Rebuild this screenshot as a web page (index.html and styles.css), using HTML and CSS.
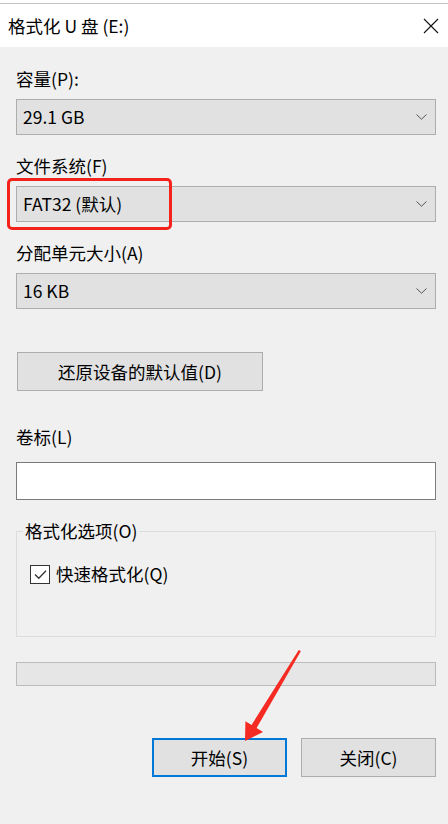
FILE: index.html
```html
<!DOCTYPE html>
<html lang="zh-CN">
<head>
<meta charset="utf-8">
<title>格式化 U 盘 (E:)</title>
<link rel="stylesheet" href="styles.css">
</head>
<body>
<div class="window">
  <div class="topedge"></div>
  <header class="titlebar">
    <span class="title">格式化 U 盘 (E:)</span>
    <svg class="close" width="16" height="16" viewBox="0 0 16 16"><path d="M1 1L15 15M15 1L1 15" stroke="#111" stroke-width="1.1" fill="none"/></svg>
  </header>
  <main class="content">
    <div class="label first">容量(P):</div>
    <div class="select">
      <span>29.1 GB</span>
      <svg class="chev" width="11" height="6" viewBox="0 0 11 6"><path d="M0.5 0.5L5.5 5.2L10.5 0.5" stroke="#555" stroke-width="1" fill="none"/></svg>
    </div>

    <div class="label">文件系统(F)</div>
    <div class="select highlighted">
      <span>FAT32 (默认)</span>
      <svg class="chev" width="11" height="6" viewBox="0 0 11 6"><path d="M0.5 0.5L5.5 5.2L10.5 0.5" stroke="#555" stroke-width="1" fill="none"/></svg>
      <div class="redbox"></div>
    </div>

    <div class="label">分配单元大小(A)</div>
    <div class="select">
      <span>16 KB</span>
      <svg class="chev" width="11" height="6" viewBox="0 0 11 6"><path d="M0.5 0.5L5.5 5.2L10.5 0.5" stroke="#555" stroke-width="1" fill="none"/></svg>
    </div>

    <button class="btn reset">还原设备的默认值(D)</button>

    <div class="label vol">卷标(L)</div>
    <div class="textbox"></div>

    <fieldset class="group">
      <legend>格式化选项(O)</legend>
      <div class="check-row">
        <span class="checkbox"><svg width="17" height="17" viewBox="0 0 17 17"><path d="M3 8.5L6.8 12.3L14 4.8" stroke="#333" stroke-width="1.3" fill="none"/></svg></span>
        <span>快速格式化(Q)</span>
      </div>
    </fieldset>

    <div class="progress"></div>

    <div class="actions">
      <button class="btn action primary">开始(S)</button>
      <button class="btn action">关闭(C)</button>
    </div>
  </main>
  <svg class="arrow" width="448" height="824" viewBox="0 0 448 824">
    <polygon fill="#f52a22" points="299,650 300.8,651.2 256.6,728.1 263,732 245,741 245.4,721.2 251.6,724.9 298.6,650.2"/>
  </svg>
</div>
</body>
</html>
```

FILE: styles.css
```css
html {
  background: #f0f0f0;
}
body {
  margin: 0;
  font-family: "Noto Sans CJK SC", "Noto Sans", sans-serif;
  font-size: 17.5px;
  color: #000;
}
.window {
  position: relative;
  width: 448px;
  min-height: 824px;
  background: #f0f0f0;
  overflow: hidden;
}
.topedge {
  height: 3px;
  background: #fff;
}
.titlebar {
  height: 43px;
  background: #fff;
  border-top: 1px solid #c4c4c4;
  display: flex;
  align-items: center;
  justify-content: space-between;
  padding: 0 9px 0 8px;
}
.title {
  font-size: 17.5px;
  line-height: 22px;
}
.close {
  display: block;
}
.content {
  padding: 0 12px 0 16px;
  display: flex;
  flex-direction: column;
}
.label {
  line-height: 22px;
  margin-top: 20px;
  margin-bottom: 9px;
}
.label.first {
  margin-top: 21px;
}
.select {
  position: relative;
  height: 36px;
  box-sizing: border-box;
  border: 1px solid #adadad;
  background: #e1e1e1;
  display: flex;
  align-items: center;
  justify-content: space-between;
  padding: 0 8px 0 6px;
  line-height: 22px;
}
.chev {
  display: block;
}
.redbox {
  position: absolute;
  left: -10px;
  top: -9px;
  width: 165px;
  height: 52px;
  box-sizing: border-box;
  border: 3px solid #f5221b;
  border-radius: 5px;
}
.btn {
  font-family: inherit;
  font-size: 17.5px;
  color: #000;
  background: #e1e1e1;
  border: 1px solid #adadad;
  box-sizing: border-box;
  padding: 0;
  line-height: 22px;
}
.reset {
  align-self: flex-start;
  margin-left: 1px;
  margin-top: 43px;
  width: 246px;
  height: 39px;
}
.label.vol {
  margin-top: 35px;
  margin-bottom: 14px;
}
.textbox {
  height: 38px;
  box-sizing: border-box;
  background: #fff;
  border: 1px solid #7a7a7a;
}
.group {
  margin: 20px 0 0 0;
  padding: 0 0 51px 13px;
  border: 1px solid #dcdcdc;
  min-width: 0;
}
.group legend {
  margin-left: -7px;
  padding: 0 2px;
  line-height: 22px;
}
.check-row {
  display: flex;
  align-items: center;
  gap: 6px;
  margin-top: 21px;
  line-height: 22px;
}
.checkbox {
  width: 20px;
  height: 19px;
  box-sizing: border-box;
  border: 1px solid #333;
  background: #fff;
  display: flex;
  align-items: center;
  justify-content: center;
}
.checkbox svg {
  display: block;
}
.progress {
  margin-top: 25px;
  height: 24px;
  box-sizing: border-box;
  border: 1px solid #bcbcbc;
  background: #e6e6e6;
}
.actions {
  margin-top: 52px;
  display: flex;
  justify-content: flex-end;
  gap: 14px;
}
.action {
  width: 135px;
  height: 39px;
}
.primary {
  border: 2px solid #0078d7;
}
.arrow {
  position: absolute;
  left: 0;
  top: 0;
  pointer-events: none;
}
```
